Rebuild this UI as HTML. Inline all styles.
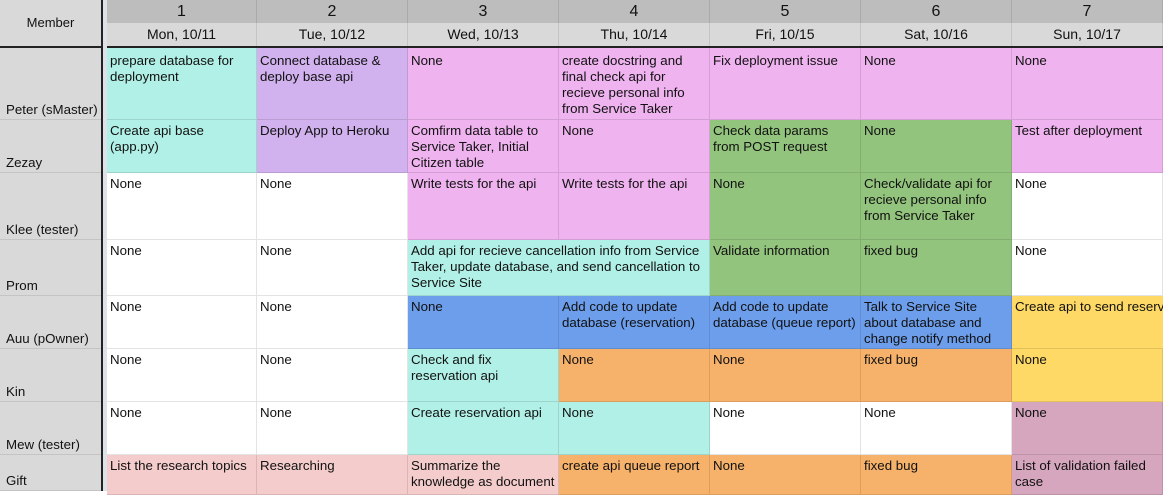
<!DOCTYPE html>
<html><head><meta charset="utf-8"><style>
*{margin:0;padding:0;box-sizing:border-box}
body{width:1163px;height:491px;overflow:hidden;background:#fff;font-family:"Liberation Sans",Arial,sans-serif;font-size:13.3px;color:#111;position:relative}
.c{position:absolute;border-right:1px solid rgba(0,0,0,0.11);border-bottom:1px solid rgba(0,0,0,0.11);padding:3px 2px 0 3px;line-height:16px;overflow:hidden;white-space:normal}
.n{white-space:nowrap}
.m{position:absolute;left:0;width:101px;background:#d9d9d9;border-bottom:1px solid #c4c4c4;padding:0 0 1px 6px;display:flex;align-items:flex-end;line-height:16px;color:#111}
.h1{position:absolute;top:0;height:23px;background:#bdbdbd;text-align:center;font-size:16px;line-height:23px;border-right:1px solid #aaa}
.h2{position:absolute;top:23px;height:23px;background:#d9d9d9;text-align:center;font-size:14px;line-height:23px;border-right:1px solid #c4c4c4}
.cy{background:#b1f0e6}.pu{background:#d1b2ee}.pk{background:#efb3ef}.gr{background:#93c47d}.bl{background:#6d9eeb}.or{background:#f6b26b}.ye{background:#ffd966}.mv{background:#d5a6bd}.lr{background:#f4cccc}.wh{background:#fff}
</style></head><body>
<div style="position:absolute;left:0;top:0;width:101px;height:46px;background:#d9d9d9;text-align:center;line-height:46px;font-size:13px">Member</div>
<div style="position:absolute;left:101px;top:0;width:2px;height:491px;background:#222"></div>
<div style="position:absolute;left:103px;top:0;width:4px;height:491px;background:#dde1e8"></div>
<div style="position:absolute;left:0;top:46px;width:1163px;height:2px;background:#222"></div>
<div style="position:absolute;left:103px;top:46px;width:4px;height:2px;background:#dde1e8"></div>

<div class="h1" style="left:107px;width:150px">1</div><div class="h2" style="left:107px;width:150px">Mon, 10/11</div>
<div class="h1" style="left:257px;width:151px">2</div><div class="h2" style="left:257px;width:151px">Tue, 10/12</div>
<div class="h1" style="left:408px;width:151px">3</div><div class="h2" style="left:408px;width:151px">Wed, 10/13</div>
<div class="h1" style="left:559px;width:151px">4</div><div class="h2" style="left:559px;width:151px">Thu, 10/14</div>
<div class="h1" style="left:710px;width:151px">5</div><div class="h2" style="left:710px;width:151px">Fri, 10/15</div>
<div class="h1" style="left:861px;width:151px">6</div><div class="h2" style="left:861px;width:151px">Sat, 10/16</div>
<div class="h1" style="left:1012px;width:151px">7</div><div class="h2" style="left:1012px;width:151px">Sun, 10/17</div>

<div class="m" style="top:48px;height:72px">Peter (sMaster)</div>
<div class="m" style="top:120px;height:53px">Zezay</div>
<div class="m" style="top:173px;height:67px">Klee (tester)</div>
<div class="m" style="top:240px;height:56px">Prom</div>
<div class="m" style="top:296px;height:53px">Auu (pOwner)</div>
<div class="m" style="top:349px;height:53px">Kin</div>
<div class="m" style="top:402px;height:53px">Mew (tester)</div>
<div class="m" style="top:455px;height:36px">Gift</div>

<div class="c cy n" style="left:107px;top:48px;width:150px;height:72px;padding-top:5px">prepare database for<br>deployment</div>
<div class="c pu n" style="left:257px;top:48px;width:151px;height:72px;padding-top:5px">Connect database &amp;<br>deploy base api</div>
<div class="c pk" style="left:408px;top:48px;width:151px;height:72px;padding-top:5px">None</div>
<div class="c pk n" style="left:559px;top:48px;width:151px;height:72px;padding-top:5px">create docstring and<br>final check api for<br>recieve personal info<br>from Service Taker</div>
<div class="c pk" style="left:710px;top:48px;width:151px;height:72px;padding-top:5px">Fix deployment issue</div>
<div class="c pk" style="left:861px;top:48px;width:151px;height:72px;padding-top:5px">None</div>
<div class="c pk" style="left:1012px;top:48px;width:151px;height:72px;padding-top:5px">None</div>

<div class="c cy n" style="left:107px;top:120px;width:150px;height:53px">Create api base<br>(app.py)</div>
<div class="c pu n" style="left:257px;top:120px;width:151px;height:53px">Deploy App to Heroku</div>
<div class="c pk n" style="left:408px;top:120px;width:151px;height:53px">Comfirm data table to<br>Service Taker, Initial<br>Citizen table</div>
<div class="c pk" style="left:559px;top:120px;width:151px;height:53px">None</div>
<div class="c gr n" style="left:710px;top:120px;width:151px;height:53px">Check data params<br>from POST request</div>
<div class="c gr" style="left:861px;top:120px;width:151px;height:53px">None</div>
<div class="c pk n" style="left:1012px;top:120px;width:151px;height:53px">Test after deployment</div>

<div class="c wh" style="left:107px;top:173px;width:150px;height:67px">None</div>
<div class="c wh" style="left:257px;top:173px;width:151px;height:67px">None</div>
<div class="c pk n" style="left:408px;top:173px;width:151px;height:67px">Write tests for the api</div>
<div class="c pk n" style="left:559px;top:173px;width:151px;height:67px">Write tests for the api</div>
<div class="c gr" style="left:710px;top:173px;width:151px;height:67px">None</div>
<div class="c gr n" style="left:861px;top:173px;width:151px;height:67px">Check/validate api for<br>recieve personal info<br>from Service Taker</div>
<div class="c wh" style="left:1012px;top:173px;width:151px;height:67px">None</div>

<div class="c wh" style="left:107px;top:240px;width:150px;height:56px">None</div>
<div class="c wh" style="left:257px;top:240px;width:151px;height:56px">None</div>
<div class="c cy n" style="left:408px;top:240px;width:302px;height:56px">Add api for recieve cancellation info from Service<br>Taker, update database, and send cancellation to<br>Service Site</div>
<div class="c gr n" style="left:710px;top:240px;width:151px;height:56px">Validate information</div>
<div class="c gr" style="left:861px;top:240px;width:151px;height:56px">fixed bug</div>
<div class="c wh" style="left:1012px;top:240px;width:151px;height:56px">None</div>

<div class="c wh" style="left:107px;top:296px;width:150px;height:53px">None</div>
<div class="c wh" style="left:257px;top:296px;width:151px;height:53px">None</div>
<div class="c bl" style="left:408px;top:296px;width:151px;height:53px">None</div>
<div class="c bl n" style="left:559px;top:296px;width:151px;height:53px">Add code to update<br>database (reservation)</div>
<div class="c bl n" style="left:710px;top:296px;width:151px;height:53px">Add code to update<br>database (queue report)</div>
<div class="c bl n" style="left:861px;top:296px;width:151px;height:53px">Talk to Service Site<br>about database and<br>change notify method</div>
<div class="c ye n" style="left:1012px;top:296px;width:160px;height:53px">Create api to send reservation</div>

<div class="c wh" style="left:107px;top:349px;width:150px;height:53px">None</div>
<div class="c wh" style="left:257px;top:349px;width:151px;height:53px">None</div>
<div class="c cy n" style="left:408px;top:349px;width:151px;height:53px">Check and fix<br>reservation api</div>
<div class="c or" style="left:559px;top:349px;width:151px;height:53px">None</div>
<div class="c or" style="left:710px;top:349px;width:151px;height:53px">None</div>
<div class="c or" style="left:861px;top:349px;width:151px;height:53px">fixed bug</div>
<div class="c ye" style="left:1012px;top:349px;width:151px;height:53px">None</div>

<div class="c wh" style="left:107px;top:402px;width:150px;height:53px">None</div>
<div class="c wh" style="left:257px;top:402px;width:151px;height:53px">None</div>
<div class="c cy n" style="left:408px;top:402px;width:151px;height:53px">Create reservation api</div>
<div class="c cy" style="left:559px;top:402px;width:151px;height:53px">None</div>
<div class="c wh" style="left:710px;top:402px;width:151px;height:53px">None</div>
<div class="c wh" style="left:861px;top:402px;width:151px;height:53px">None</div>
<div class="c mv" style="left:1012px;top:402px;width:151px;height:53px">None</div>

<div class="c lr n" style="left:107px;top:455px;width:150px;height:40px">List the research topics</div>
<div class="c lr" style="left:257px;top:455px;width:151px;height:40px">Researching</div>
<div class="c lr n" style="left:408px;top:455px;width:151px;height:40px">Summarize the<br>knowledge as document</div>
<div class="c or n" style="left:559px;top:455px;width:151px;height:40px">create api queue report</div>
<div class="c or" style="left:710px;top:455px;width:151px;height:40px">None</div>
<div class="c or" style="left:861px;top:455px;width:151px;height:40px">fixed bug</div>
<div class="c mv n" style="left:1012px;top:455px;width:151px;height:40px">List of validation failed<br>case</div>
</body></html>
